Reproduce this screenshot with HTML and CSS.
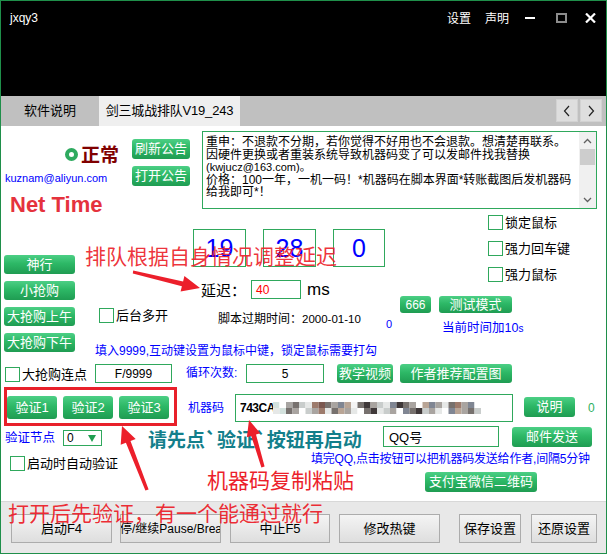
FILE: index.html
```html
<!DOCTYPE html>
<html lang="zh-CN">
<head>
<meta charset="utf-8">
<title>jxqy3</title>
<link rel="stylesheet" href="styles.css">
</head>
<body>
<div class="win">
  <div class="titlebar">
    <span class="app-title">jxqy3</span>
    <div class="title-actions">
      <span class="t-link">设置</span>
      <span class="t-link">声明</span>
      <span class="t-min"></span>
      <span class="t-max"></span>
      <svg class="t-close" viewBox="0 0 11 10"><path d="M1 0.5 L10 9.5 M10 0.5 L1 9.5" stroke="#fff" stroke-width="2.2" fill="none"/></svg>
    </div>
  </div>

  <div class="tabstrip">
    <div class="tab">软件说明</div>
    <div class="tab active">剑三城战排队V19_243</div>
    <div class="tab-scroll">
      <span class="scroll-btn"><svg viewBox="0 0 8 12" class="chev"><polyline points="6,1 1.5,6 6,11" fill="none" stroke="#222" stroke-width="1.2"/></svg></span>
      <span class="scroll-btn"><svg viewBox="0 0 8 12" class="chev"><polyline points="2,1 6.5,6 2,11" fill="none" stroke="#222" stroke-width="1.2"/></svg></span>
    </div>
  </div>

  <div class="page">
    <div class="band band-top">
      <div class="brand">
        <div class="status-row">
          <div class="status-col">
            <div class="status"><span class="ring"></span><span class="status-text">正常</span></div>
            <div class="email">kuznam@aliyun.com</div>
          </div>
          <div class="notice-btns">
            <button class="gbtn notice-btn">刷新公告</button>
            <button class="gbtn notice-btn">打开公告</button>
          </div>
        </div>
        <div class="nettime">Net Time</div>
      </div>
      <div class="notice">
        <div class="notice-text">
          <p>重申：不退款不分期，若你觉得不好用也不会退款。想清楚再联系。</p>
          <p>因硬件更换或者重装系统导致机器码变了可以发邮件找我替换</p>
          <p class="mail">(kwjucz@163.com)。</p>
          <p>价格：100一年，一机一码！*机器码在脚本界面*转账截图后发机器码</p>
          <p>给我即可*！</p>
        </div>
        <div class="vscroll">
          <span class="sb-arrow"><svg viewBox="0 0 9 6" class="sb-chev"><polyline points="1,5 4.5,1.5 8,5" fill="none" stroke="#606060" stroke-width="1.3"/></svg></span>
          <span class="sb-thumb"></span>
          <span class="sb-arrow sb-down"><svg viewBox="0 0 9 6" class="sb-chev"><polyline points="1,1 4.5,4.5 8,1" fill="none" stroke="#606060" stroke-width="1.3"/></svg></span>
        </div>
      </div>
    </div>

    <div class="band band-mid">
      <div class="mode-col">
        <button class="gbtn mode-btn">神行</button>
        <button class="gbtn mode-btn">小抢购</button>
        <button class="gbtn mode-btn">大抢购上午</button>
        <button class="gbtn mode-btn">大抢购下午</button>
      </div>
      <div class="mid-right">
        <div class="mid-row">
          <div class="multi-col">
            <label class="check"><span class="cb"></span>后台多开</label>
          </div>
          <div class="timer-col">
            <div class="counters">
              <span class="counter">19</span>
              <span class="counter">28</span>
              <span class="counter narrow">0</span>
            </div>
            <div class="delay-row">
              <span class="delay-label">延迟：</span>
              <span class="field delay-input">40</span>
              <span class="ms">ms</span>
            </div>
            <div class="expire-row">
              <span class="expire">脚本过期时间：<span class="expire-date">2000-01-10</span></span>
              <span class="expire-zero">0</span>
            </div>
          </div>
          <div class="opt-col">
            <div class="opt-checks">
              <label class="check"><span class="cb"></span>锁定鼠标</label>
              <label class="check"><span class="cb"></span>强力回车键</label>
              <label class="check"><span class="cb"></span>强力鼠标</label>
            </div>
            <div class="test-row">
              <button class="gbtn btn-666">666</button>
              <button class="gbtn btn-test">测试模式</button>
            </div>
            <div class="time-add">当前时间加10<span class="unit-s">s</span></div>
          </div>
        </div>
        <div class="hint">填入9999,互动键设置为鼠标中键，锁定鼠标需要打勾</div>
      </div>
    </div>

    <div class="band band-loop">
      <label class="check burst"><span class="cb"></span>大抢购连点</label>
      <span class="field burst-input">F/9999</span>
      <span class="loop-label">循环次数:</span>
      <span class="field loop-input">5</span>
      <button class="gbtn video-btn">教学视频</button>
      <button class="gbtn cfg-btn">作者推荐配置图</button>
    </div>

    <div class="band band-verify">
      <div class="verify-col">
        <div class="verify-box">
          <button class="gbtn verify-btn">验证1</button>
          <button class="gbtn verify-btn">验证2</button>
          <button class="gbtn verify-btn">验证3</button>
        </div>
        <div class="node-row">
          <span class="node-label">验证节点</span>
          <span class="combo"><span>0</span><svg viewBox="0 0 8 7" class="combo-tri"><polygon points="0,0 8,0 4,7" fill="#1f9e50"/></svg></span>
        </div>
        <label class="check auto-check"><span class="cb"></span>启动时自动验证</label>
      </div>
      <div class="code-col">
        <div class="code-row">
          <span class="code-label">机器码</span>
          <span class="field code-input">
            <span class="code-text">743CA</span>
            <svg class="mosaic" viewBox="0 0 208 12" width="208" height="12">
              <g>
                <rect x="0" y="0" width="6.5" height="6" fill="#d3e1dd"/><rect x="6.5" y="0" width="6.5" height="6" fill="#ffffff"/><rect x="13" y="0" width="6.5" height="6" fill="#a8a5a2"/><rect x="19.5" y="0" width="6.5" height="6" fill="#77716e"/><rect x="26" y="0" width="6.5" height="6" fill="#c9cdcc"/><rect x="32.5" y="0" width="6.5" height="6" fill="#e6e8e7"/><rect x="39" y="0" width="6.5" height="6" fill="#9d7b6c"/><rect x="45.5" y="0" width="6.5" height="6" fill="#7b5850"/><rect x="52" y="0" width="6.5" height="6" fill="#7a7470"/><rect x="58.5" y="0" width="6.5" height="6" fill="#a9a4a0"/><rect x="65" y="0" width="6.5" height="6" fill="#808693"/><rect x="71.5" y="0" width="6.5" height="6" fill="#b9a596"/><rect x="78" y="0" width="6.5" height="6" fill="#f4f4f4"/><rect x="84.5" y="0" width="6.5" height="6" fill="#77716e"/><rect x="91" y="0" width="6.5" height="6" fill="#3f3839"/><rect x="97.5" y="0" width="6.5" height="6" fill="#a9a4a0"/><rect x="104" y="0" width="6.5" height="6" fill="#c9cdcc"/><rect x="110.5" y="0" width="6.5" height="6" fill="#e6e8e7"/><rect x="117" y="0" width="6.5" height="6" fill="#808693"/><rect x="123.5" y="0" width="6.5" height="6" fill="#3f3839"/><rect x="130" y="0" width="6.5" height="6" fill="#77716e"/><rect x="136.5" y="0" width="6.5" height="6" fill="#a9a4a0"/><rect x="143" y="0" width="6.5" height="6" fill="#ffffff"/><rect x="149.5" y="0" width="6.5" height="6" fill="#b9a596"/><rect x="156" y="0" width="6.5" height="6" fill="#808693"/><rect x="162.5" y="0" width="6.5" height="6" fill="#a9a4a0"/><rect x="169" y="0" width="6.5" height="6" fill="#e6e8e7"/><rect x="175.5" y="0" width="6.5" height="6" fill="#77716e"/><rect x="182" y="0" width="6.5" height="6" fill="#9d7b6c"/><rect x="188.5" y="0" width="6.5" height="6" fill="#a9a4a0"/><rect x="195" y="0" width="6.5" height="6" fill="#808693"/><rect x="201.5" y="0" width="6.5" height="6" fill="#ffffff"/>
                <rect x="0" y="6" width="6.5" height="6" fill="#e6e8e7"/><rect x="6.5" y="6" width="6.5" height="6" fill="#d3e1dd"/><rect x="13" y="6" width="6.5" height="6" fill="#77716e"/><rect x="19.5" y="6" width="6.5" height="6" fill="#a9a4a0"/><rect x="26" y="6" width="6.5" height="6" fill="#ffffff"/><rect x="32.5" y="6" width="6.5" height="6" fill="#c9cdcc"/><rect x="39" y="6" width="6.5" height="6" fill="#a9a4a0"/><rect x="45.5" y="6" width="6.5" height="6" fill="#9d7b6c"/><rect x="52" y="6" width="6.5" height="6" fill="#e6e8e7"/><rect x="58.5" y="6" width="6.5" height="6" fill="#77716e"/><rect x="65" y="6" width="6.5" height="6" fill="#b9a596"/><rect x="71.5" y="6" width="6.5" height="6" fill="#a9a4a0"/><rect x="78" y="6" width="6.5" height="6" fill="#e6e8e7"/><rect x="84.5" y="6" width="6.5" height="6" fill="#ffffff"/><rect x="91" y="6" width="6.5" height="6" fill="#77716e"/><rect x="97.5" y="6" width="6.5" height="6" fill="#3f3839"/><rect x="104" y="6" width="6.5" height="6" fill="#e6e8e7"/><rect x="110.5" y="6" width="6.5" height="6" fill="#c9cdcc"/><rect x="117" y="6" width="6.5" height="6" fill="#a9a4a0"/><rect x="123.5" y="6" width="6.5" height="6" fill="#ffffff"/><rect x="130" y="6" width="6.5" height="6" fill="#808693"/><rect x="136.5" y="6" width="6.5" height="6" fill="#77716e"/><rect x="143" y="6" width="6.5" height="6" fill="#3f3839"/><rect x="149.5" y="6" width="6.5" height="6" fill="#c9cdcc"/><rect x="156" y="6" width="6.5" height="6" fill="#a9a4a0"/><rect x="162.5" y="6" width="6.5" height="6" fill="#e6e8e7"/><rect x="169" y="6" width="6.5" height="6" fill="#ffffff"/><rect x="175.5" y="6" width="6.5" height="6" fill="#808693"/><rect x="182" y="6" width="6.5" height="6" fill="#b9a596"/><rect x="188.5" y="6" width="6.5" height="6" fill="#a9a4a0"/><rect x="195" y="6" width="6.5" height="6" fill="#77716e"/><rect x="201.5" y="6" width="6.5" height="6" fill="#c9cdcc"/>
              </g>
            </svg>
          </span>
          <button class="gbtn help-btn">说明</button>
          <span class="code-zero">0</span>
        </div>
        <div class="qq-row">
          <span class="field qq-input">QQ号</span>
          <button class="gbtn mail-btn">邮件发送</button>
        </div>
        <div class="qq-hint">填完QQ,点击按钮可以把机器码发送给作者,间隔5分钟</div>
        <button class="gbtn pay-btn">支付宝微信二维码</button>
      </div>
    </div>
  </div>

  <div class="footer">
    <button class="fbtn fb-start">启动F4</button>
    <button class="fbtn fb-pause"><span>停/继续Pause/Brea</span></button>
    <button class="fbtn fb-stop">中止F5</button>
    <button class="fbtn fb-hotkey">修改热键</button>
    <button class="fbtn fb-save">保存设置</button>
    <button class="fbtn fb-reset">还原设置</button>
  </div>

  <div class="annot annot-delay">排队根据自身情况调整延迟</div>
  <div class="annot annot-verify">请先点`验证`按钮再启动</div>
  <div class="annot annot-code">机器码复制粘贴</div>
  <div class="annot annot-open">打开后先验证，有一个能通过就行</div>
  <svg class="annot-arrows" viewBox="0 0 607 555" width="607" height="555">
    <polygon fill="#ec1f2b" points="132.8,273.5 181.9,286.2 180.6,291.6 200,288 184.4,276.0 183.1,281.4 133.2,270.5"/>
    <polygon fill="#ec1f2b" points="264.6,466.6 256.0,434.6 260.3,433.3 249,420 246.9,437.3 251.2,436.0 261.4,467.4"/>
    <polygon fill="#ec1f2b" points="148.6,489.5 130.5,440.9 135.7,438.9 122,426 120.7,444.7 125.9,442.7 145.4,490.5"/>
  </svg>
</div>
</body>
</html>
```

FILE: styles.css
```css
* { box-sizing: border-box; margin: 0; padding: 0; }

body {
  width: 607px;
  height: 555px;
  overflow: hidden;
  background: #fff;
  font-family: "Liberation Sans", "Noto Sans CJK SC", sans-serif;
  font-size: 12px;
  color: #000;
}

button {
  font: inherit;
  border: 0;
  background: none;
  color: inherit;
  cursor: default;
}

.win {
  position: relative;
  width: 607px;
  height: 554px;
  border: 1px solid #1f8f4a;
  display: flex;
  flex-direction: column;
  background: #fff;
}

/* ---------- title bar ---------- */
.titlebar {
  flex: none;
  height: 95px;
  background: #000;
  color: #fff;
  display: flex;
  align-items: flex-start;
  padding: 10px 10px 0 9px;
}
.app-title { font-size: 12px; line-height: 14px; }
.title-actions { margin-left: auto; display: flex; align-items: flex-start; }
.t-link { font-family: "Noto Sans CJK SC", sans-serif; font-size: 12px; line-height: 14px; }
.t-link + .t-link { margin-left: 14px; }
.t-min { width: 10px; height: 2px; background: #fff; margin: 6px 0 0 16px; }
.t-max { width: 11px; height: 10px; border: 2px solid #8c8c8c; margin: 2px 0 0 21px; }
.t-close { width: 11px; height: 10px; margin: 2px 0 0 18px; }

/* ---------- tabs ---------- */
.tabstrip {
  flex: none;
  height: 30px;
  background: #c0c0c0;
  display: flex;
  font-size: 13px;
}
.tab { width: 98px; display: flex; align-items: center; justify-content: center; line-height: 16px; }
.tab.active { width: 141px; background: #efefef; letter-spacing: -0.2px; }
.tab-scroll { margin-left: auto; display: flex; gap: 2px; padding: 3px 4px 0 0; }
.scroll-btn {
  width: 22px; height: 23px;
  background: #dedede;
  border: 1px solid #d2d2d2;
  display: flex; align-items: center; justify-content: center;
}
.chev { width: 8px; height: 12px; }

/* ---------- page ---------- */
.page {
  flex: none;
  height: 375px;
  background: #fff;
  display: flex;
  flex-direction: column;
}
.band { display: flex; align-items: flex-start; flex: none; }

.gbtn {
  display: flex; align-items: center; justify-content: center;
  background: linear-gradient(#4ccf85, #2db866 45%, #1f9c52);
  color: #fff;
  border-radius: 3px;
  font-size: 13px;
  line-height: 16px;
  white-space: nowrap;
}
.field {
  display: flex; align-items: center;
  background: #fff;
  border: 1px solid #2fa85c;
  white-space: nowrap;
}
.check {
  display: flex; align-items: center;
  height: 15px;
  font-size: 13px;
  line-height: 15px;
  white-space: nowrap;
}
.cb {
  width: 15px; height: 15px;
  border: 1px solid #2fa85c;
  background: #fff;
  margin-right: 2px;
  flex: none;
}

/* band 1 */
.band-top { height: 89px; }
.brand { width: 201px; display: flex; flex-direction: column; }
.status-row { display: flex; margin-top: 13px; }
.status-col { width: 131px; display: flex; flex-direction: column; }
.status { display: flex; align-items: center; height: 20px; margin-top: 5px; padding-left: 64px; }
.ring { width: 13px; height: 13px; border: 4px solid #2eaa5f; border-radius: 50%; margin-right: 3px; }
.status-text { font-family: "Noto Sans CJK SC", sans-serif; font-weight: 700; font-size: 19px; line-height: 20px; color: #800000; }
.email { margin-top: 8px; padding-left: 4px; font-size: 11px; line-height: 13px; color: #0000ff; }
.notice-btns { display: flex; flex-direction: column; gap: 7px; }
.notice-btn { width: 58px; height: 20px; }
.nettime { margin-top: 8px; padding-left: 9px; font-weight: 700; font-size: 22px; line-height: 22px; color: #e5323d; }

.notice {
  margin-top: 5px;
  width: 395px; height: 78px;
  border: 1px solid #2fa85c;
  display: flex;
}
.notice-text { flex: 1; padding: 4px 0 0 3px; font-size: 12px; line-height: 12.5px; white-space: nowrap; overflow: hidden; }
.notice-text .mail { font-size: 11px; }
.vscroll { width: 17px; background: #f0f0f0; display: flex; flex-direction: column; align-items: center; }
.sb-arrow { height: 17px; width: 17px; display: flex; align-items: center; justify-content: center; }
.sb-down { margin-top: auto; }
.sb-chev { width: 9px; height: 6px; }
.sb-thumb { width: 15px; height: 16px; background: #cdcdcd; }

/* band 2 */
.band-mid { height: 149px; }
.mode-col { width: 94px; display: flex; flex-direction: column; gap: 7px; padding: 40px 0 0 3px; }
.mode-btn { width: 71px; height: 19px; }
.mid-right { display: flex; flex-direction: column; }
.mid-row { display: flex; height: 128px; }
.multi-col { width: 98px; padding: 93px 0 0 4px; }
.timer-col { width: 207px; display: flex; flex-direction: column; }
.counters { display: flex; gap: 17px; margin-top: 14px; }
.counter {
  width: 53px; height: 38px;
  border: 1px solid #2fa85c;
  display: flex; align-items: center; justify-content: center;
  color: #0000ff; font-size: 25px; line-height: 28px;
}
.counter.narrow { width: 52px; }
.delay-row { display: flex; align-items: center; height: 19px; margin-top: 13px; }
.delay-label { width: 50px; margin-left: 8px; font-family: "Noto Sans CJK SC", sans-serif; font-size: 15px; line-height: 19px; }
.delay-input { width: 50px; height: 19px; padding-left: 4px; color: #ff0000; font-size: 12px; }
.ms { margin-left: 6px; font-size: 17px; line-height: 19px; }
.expire-row { display: flex; margin-top: 13px; padding: 0 8px 0 25px; }
.expire { font-size: 12px; line-height: 15px; }
.expire-date { font-size: 11.5px; }
.expire-zero { margin: 6px 0 0 auto; color: #0000ff; font-size: 11px; line-height: 12px; }
.opt-col { width: 206px; display: flex; flex-direction: column; }
.opt-checks { display: flex; flex-direction: column; gap: 11px; padding-left: 88px; }
.test-row { display: flex; gap: 8px; margin-top: 14px; }
.btn-666 { width: 31px; height: 17px; font-size: 12px; }
.btn-test { width: 73px; height: 17px; }
.time-add { margin-top: 8px; padding-left: 42px; color: #0000ff; font-size: 12.5px; line-height: 15px; }
.unit-s { font-size: 10px; }
.hint { margin-top: 1px; color: #0000ff; font-size: 12px; line-height: 14px; white-space: nowrap; }

/* band 3 */
.band-loop { height: 23px; }
.burst { width: 90px; margin: 3px 0 0 4px; }
.burst-input { width: 77px; height: 19px; justify-content: center; font-size: 12px; }
.loop-label { width: 60px; margin-left: 14px; color: #0000ff; font-size: 12px; line-height: 19px; }
.loop-input { width: 78px; height: 19px; justify-content: center; font-size: 12px; }
.video-btn { width: 56px; height: 19px; margin-left: 13px; }
.cfg-btn { width: 112px; height: 19px; margin-left: 7px; }

/* band 4 */
.band-verify { height: 114px; }
.verify-col { width: 179px; display: flex; flex-direction: column; }
.verify-box {
  margin-left: 3px;
  width: 173px; height: 39px;
  border: 3px solid #e8202a;
  display: flex; gap: 6px;
  padding-top: 6px;
}
.verify-btn { width: 50px; height: 23px; font-size: 13px; }
.node-row { display: flex; align-items: center; margin-top: 4px; padding-left: 4px; height: 16px; }
.node-label { width: 58px; color: #0000ff; font-size: 12.5px; line-height: 16px; }
.combo {
  width: 39px; height: 16px;
  border: 1px solid #2fa85c;
  display: flex; align-items: center; justify-content: space-between;
  padding: 0 5px 0 3px;
  font-size: 12px;
}
.combo-tri { width: 8px; height: 7px; }
.auto-check { margin: 10px 0 0 9px; }

.code-col { display: flex; flex-direction: column; }
.code-row { display: flex; align-items: flex-start; margin-top: 7px; }
.code-label { width: 47px; margin: 7px 0 0 8px; color: #0000ff; font-size: 12px; line-height: 14px; }
.code-input { width: 278px; height: 28px; padding-left: 4px; }
.code-text { font-weight: 700; font-size: 12px; letter-spacing: -0.5px; width: 33px; }
.mosaic { display: block; width: 208px; height: 12px; }
.help-btn { width: 51px; height: 20px; margin: 3px 0 0 11px; }
.code-zero { margin: 7px 0 0 13px; color: #2fb060; font-size: 12px; line-height: 14px; }
.qq-row { display: flex; align-items: flex-start; margin-top: 4px; padding-left: 203px; }
.qq-input { width: 116px; height: 21px; padding-left: 5px; font-size: 13px; }
.mail-btn { width: 80px; height: 20px; margin: 1px 0 0 13px; }
.qq-hint { margin-top: 5px; padding-left: 131px; color: #0000ff; font-size: 12px; line-height: 14px; letter-spacing: -0.2px; white-space: nowrap; }
.pay-btn { width: 112px; height: 20px; margin: 6px 0 0 245px; }

/* ---------- footer ---------- */
.footer {
  flex: none;
  height: 52px;
  background: #e8e8e8;
  border-top: 1px solid #d8d8d8;
  display: flex;
  align-items: flex-start;
  padding: 12px 0 0 10px;
}
.fbtn {
  height: 29px;
  display: flex; align-items: center; justify-content: center;
  overflow: hidden;
  white-space: nowrap;
  background: linear-gradient(#f4f4f4, #dedede);
  border: 1px solid #acacac;
  font-size: 13px;
  line-height: 16px;
}
.fbtn span { flex: none; }
.fb-start { width: 101px; }
.fb-pause { width: 101px; margin-left: 8px; justify-content: flex-start; font-size: 12px; padding-left: 0; }
.fb-pause span { margin-left: -1px; }
.fb-stop { width: 100px; margin-left: 9px; }
.fb-hotkey { width: 101px; margin-left: 9px; }
.fb-save { width: 62px; margin-left: 19px; }
.fb-reset { width: 66px; margin-left: 10px; }

/* ---------- annotations (drawn over the screenshot) ---------- */
.annot {
  position: absolute;
  font-family: "Noto Sans CJK SC", sans-serif;
  white-space: nowrap;
  pointer-events: none;
}
.annot-delay { left: 84px; top: 244px; font-size: 21px; line-height: 21px; color: rgba(236, 31, 43, 0.92); }
.annot-verify { left: 147px; top: 427px; font-size: 19px; line-height: 21px; font-weight: 700; color: #137f8b; }
.annot-code { left: 206px; top: 468px; font-size: 21px; line-height: 21px; color: #ec1f2b; }
.annot-open { left: 7px; top: 501px; font-size: 21px; line-height: 21px; color: rgba(236, 31, 43, 0.95); }
.annot-arrows { position: absolute; left: -1px; top: -1px; width: 607px; height: 555px; pointer-events: none; }
```
